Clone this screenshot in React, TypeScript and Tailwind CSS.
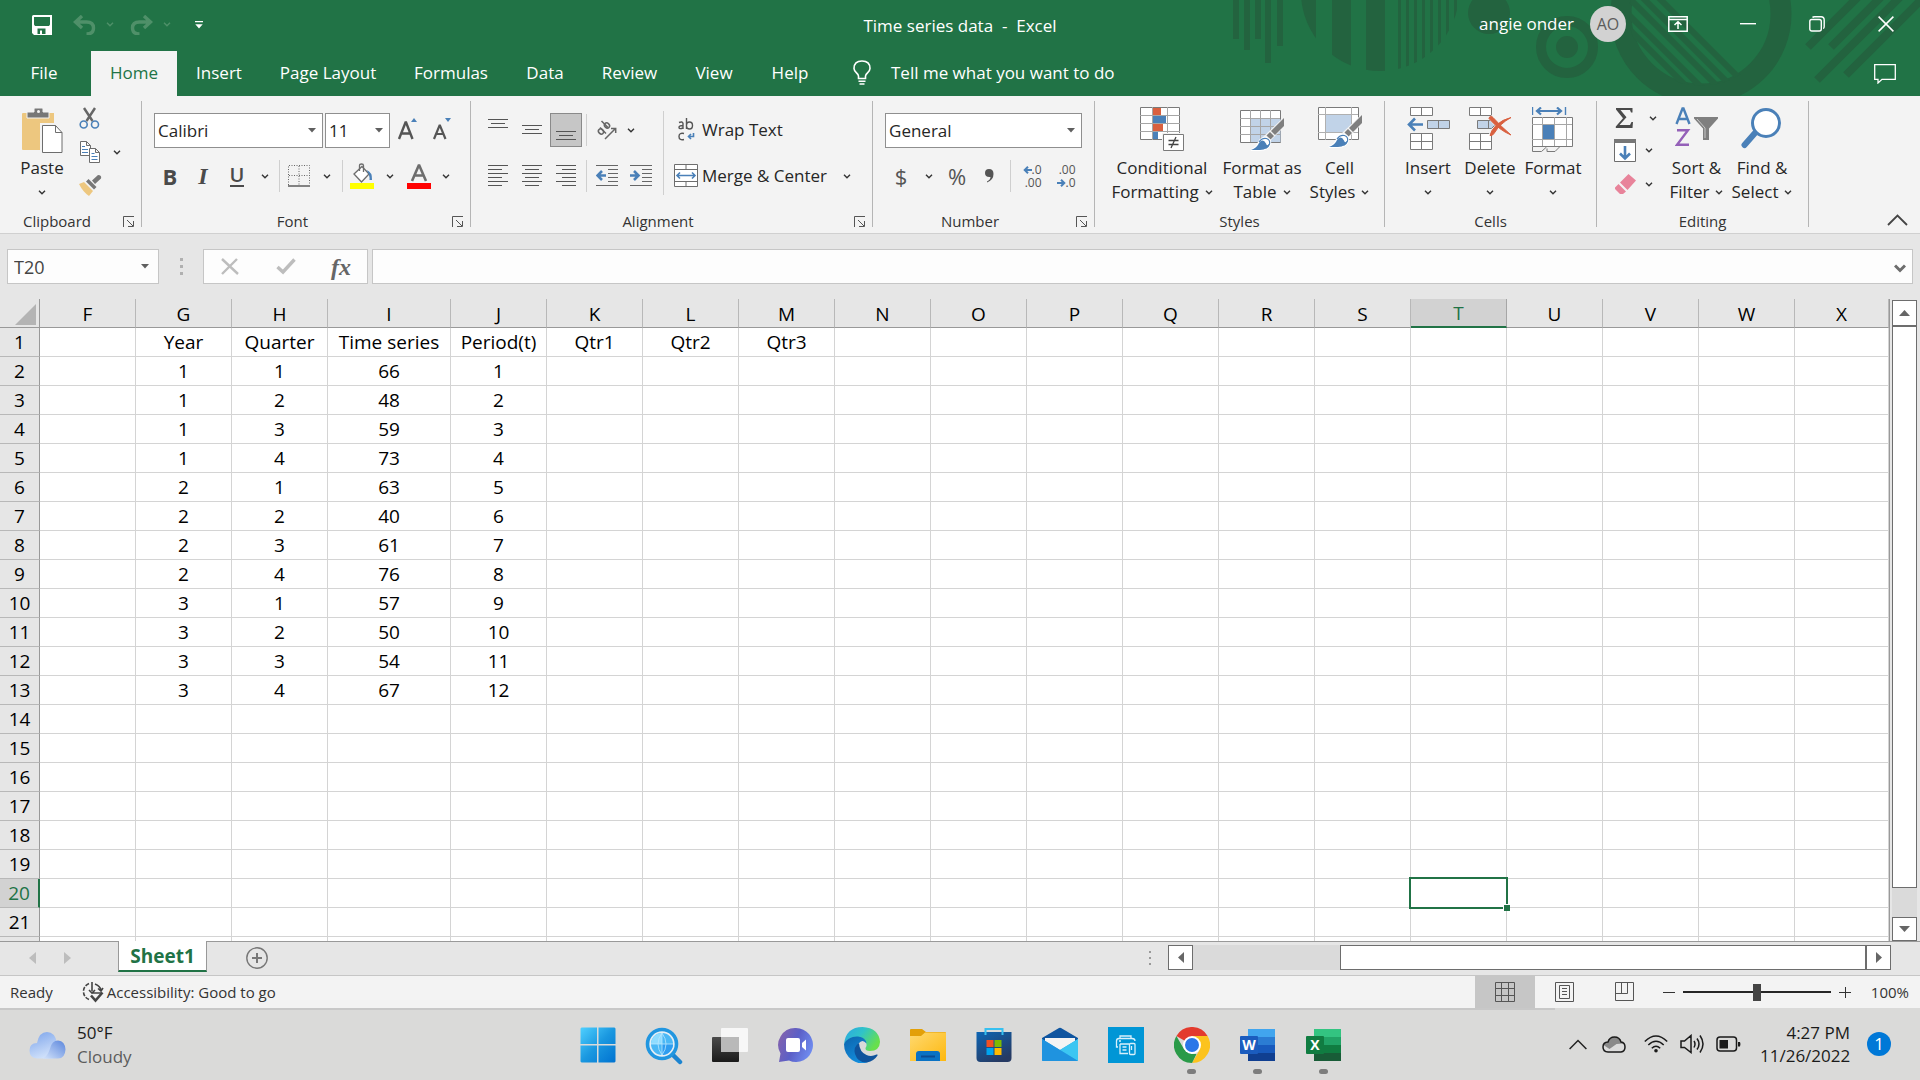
import type { ReactNode } from "react";

const columns = [
  { name: "F", width: "w-[96px]" },
  { name: "G", width: "w-[96px]" },
  { name: "H", width: "w-[96px]" },
  { name: "I", width: "w-[123px]" },
  { name: "J", width: "w-[96px]" },
  { name: "K", width: "w-[96px]" },
  { name: "L", width: "w-[96px]" },
  { name: "M", width: "w-[96px]" },
  { name: "N", width: "w-[96px]" },
  { name: "O", width: "w-[96px]" },
  { name: "P", width: "w-[96px]" },
  { name: "Q", width: "w-[96px]" },
  { name: "R", width: "w-[96px]" },
  { name: "S", width: "w-[96px]" },
  { name: "T", width: "w-[96px]" },
  { name: "U", width: "w-[96px]" },
  { name: "V", width: "w-[96px]" },
  { name: "W", width: "w-[96px]" },
  { name: "X", width: "" },
];

const sheet: Record<number, Record<string, string>> = {
  1: { G: "Year", H: "Quarter", I: "Time series", J: "Period(t)", K: "Qtr1", L: "Qtr2", M: "Qtr3" },
  2: { G: "1", H: "1", I: "66", J: "1" },
  3: { G: "1", H: "2", I: "48", J: "2" },
  4: { G: "1", H: "3", I: "59", J: "3" },
  5: { G: "1", H: "4", I: "73", J: "4" },
  6: { G: "2", H: "1", I: "63", J: "5" },
  7: { G: "2", H: "2", I: "40", J: "6" },
  8: { G: "2", H: "3", I: "61", J: "7" },
  9: { G: "2", H: "4", I: "76", J: "8" },
  10: { G: "3", H: "1", I: "57", J: "9" },
  11: { G: "3", H: "2", I: "50", J: "10" },
  12: { G: "3", H: "3", I: "54", J: "11" },
  13: { G: "3", H: "4", I: "67", J: "12" },
};

// the last row is only a sliver under row 21, so it carries no number
const lastRow = 22;
const rows = Array.from({ length: lastRow }, (_, i) => i + 1);

const tabs = [
  { name: "File", width: "w-[88px]" },
  { name: "Home", width: "w-[86px]" },
  { name: "Insert", width: "w-[84px]" },
  { name: "Page Layout", width: "w-[134px]" },
  { name: "Formulas", width: "w-[112px]" },
  { name: "Data", width: "w-[76px]" },
  { name: "Review", width: "w-[93px]" },
  { name: "View", width: "w-[76px]" },
  { name: "Help", width: "w-[76px]" },
];

/* ---------- small shared parts ---------- */

function Chevron() {
  return (
    <svg width="8" height="5" viewBox="0 0 8 5" fill="none" stroke="#333" strokeWidth="1.4">
      <path d="M1 .8 4 3.8 7 .8" />
    </svg>
  );
}

function DownArrow({ className = "" }: { className?: string }) {
  return (
    <svg width="8" height="5" viewBox="0 0 8 5" fill="#5f5f5f" className={className}>
      <path d="M0 0h8L4 4.5z" />
    </svg>
  );
}

function Tool({ label, className = "w-8", children }: { label: string; className?: string; children: ReactNode }) {
  return (
    <button type="button" aria-label={label} className={`flex h-[34px] shrink-0 items-center justify-center ${className}`}>
      {children}
    </button>
  );
}

function Drop({ label, className = "w-6" }: { label: string; className?: string }) {
  return (
    <Tool label={label} className={className}>
      <Chevron />
    </Tool>
  );
}

function Sep({ className = "w-[7px]" }: { className?: string }) {
  return (
    <div className={`flex h-8 shrink-0 justify-center ${className}`}>
      <div className="w-px bg-[#cfcfcf]" />
    </div>
  );
}

function Combo({ label, value, className }: { label: string; value: string; className: string }) {
  return (
    <div className={`relative ${className}`}>
      <select aria-label={label} className="block h-[35px] w-full appearance-none border border-[#8f8f8f] bg-white px-[3px] pt-[2px] text-[17px] text-[#262626]">
        <option>{value}</option>
      </select>
      <DownArrow className="pointer-events-none absolute top-[15px] right-[7px]" />
    </div>
  );
}

function Group({ label, launcher, children }: { label: string; launcher?: boolean; children: ReactNode }) {
  return (
    <>
      <section aria-label={label} className="flex shrink-0 flex-col pt-[11px]">
        <div className="flex h-[101px]">{children}</div>
        <div className="flex h-[25px] items-center pt-[2px] text-[15px] text-[#333]">
          <span className="flex-1 text-center">{label}</span>
          {launcher && (
            <button type="button" aria-label={`${label} settings`} className="flex w-[27px] pl-[9px]">
              <svg width="12" height="12" viewBox="0 0 12 12" fill="none" stroke="#555">
                <path d="M.5 11V.5H11M4 4l6 6M10.500 5v5.500H5" />
              </svg>
            </button>
          )}
        </div>
      </section>
      <div className="mt-[5px] h-[126px] w-px shrink-0 bg-[#b5b5b5]" />
    </>
  );
}

function BigButton({ icon, lines, className }: { icon: ReactNode; lines: string[]; className: string }) {
  return (
    <button type="button" className={`flex shrink-0 flex-col items-center text-[17px] leading-6 text-[#262626] ${className}`}>
      <span className="flex h-[49px] shrink-0 items-start justify-center">{icon}</span>
      <span className="whitespace-nowrap">{lines[0]}</span>
      <span className="flex h-6 items-center gap-[6px] whitespace-nowrap">
        {lines[1]}
        <Chevron />
      </span>
    </button>
  );
}

/* ---------- header ---------- */

function HeaderArt() {
  const thin = [1398, 1406, 1414, 1422, 1430, 1438, 1446, 1454];
  const diagonal = [1590, 1604, 1621, 1635, 1651];
  return (
    <svg className="pointer-events-none absolute top-0 right-0" width="700" height="96" viewBox="1220 0 700 96" fill="#23633f">
      <defs>
        <clipPath id="stripeDisc">
          <circle cx="1380" cy="-8" r="79" />
        </clipPath>
        <clipPath id="innerDisc">
          <circle cx="1701" cy="14" r="72" />
        </clipPath>
      </defs>
      <path d="M1233 0h6v39h-6zM1244 0h6v50h-6zM1255 0h6v39h-6zM1265 0h6v63h-6zM1277 0h6v46h-6z" />
      <g clipPath="url(#stripeDisc)">
        <path d="M1296 0h20v96h-20zM1332 0h19v96h-19zM1366 0h19v96h-19z" />
        {thin.map((x) => (
          <rect key={x} x={x} y="0" width="3" height="96" />
        ))}
      </g>
      <circle cx="1489" cy="13" r="21" />
      <circle cx="1567" cy="47" r="11" />
      <circle cx="1567" cy="47" r="26" fill="none" stroke="#23633f" strokeWidth="10" />
      <circle cx="1701" cy="14" r="80" fill="none" stroke="#23633f" strokeWidth="21" />
      <g clipPath="url(#innerDisc)" stroke="#23633f" strokeWidth="6">
        {diagonal.map((x) => (
          <path key={x} d={`M${x} -10l130 130`} />
        ))}
      </g>
      <g stroke="#23633f" strokeWidth="8">
        <path d="M1808 47l50-50M1831 47l50-50M1817 80l84-84M1846 75l79-79" />
      </g>
    </svg>
  );
}

function TitleBar() {
  return (
    <div className="relative grid h-[51px] grid-cols-[1fr_auto_1fr] items-center text-[17px] text-white">
      <div className="flex items-center pb-[2px] pl-[32px]">
        <button type="button" aria-label="Save">
          <svg width="20" height="20" viewBox="0 0 20 20">
            <path fill="#fff" fillRule="evenodd" d="M0 1.500Q0 0 1.500 0H20V20H2L0 18zM2 2V9.500L3 11H17L18 9.500V2zM5.500 13.500V19H8V15.500H10V19H13.500V13.500z" />
          </svg>
        </button>
        <button type="button" aria-label="Undo" className="ml-[21px]">
          <svg width="23" height="20" viewBox="0 0 23 20" fill="none" stroke="#4f9069" strokeWidth="3.400">
            <path d="M9 1 2.500 7 9 13M3 7h10.500q7 0 7 6t-7 6" />
          </svg>
        </button>
        <button type="button" aria-label="Undo list" className="ml-[10px]">
          <svg width="8" height="5" viewBox="0 0 8 5" fill="none" stroke="#4f9069" strokeWidth="1.400">
            <path d="M1 .8 4 3.800 7 .8" />
          </svg>
        </button>
        <button type="button" aria-label="Redo" className="ml-[16px]">
          <svg width="23" height="20" viewBox="0 0 23 20" fill="none" stroke="#4f9069" strokeWidth="3.400">
            <path d="M14 1l6.500 6L14 13M20 7H9.500q-7 0-7 6t7 6" />
          </svg>
        </button>
        <button type="button" aria-label="Redo list" className="ml-[10px]">
          <svg width="8" height="5" viewBox="0 0 8 5" fill="none" stroke="#4f9069" strokeWidth="1.400">
            <path d="M1 .8 4 3.800 7 .8" />
          </svg>
        </button>
        <button type="button" aria-label="Customize toolbar" className="ml-[24px]">
          <svg width="8" height="8" viewBox="0 0 8 8" fill="#fff">
            <path d="M0 0h8v1.300H0zM.3 3.300h7.400L4 7.500z" />
          </svg>
        </button>
      </div>
      <h1 className="whitespace-pre">{"Time series data  -  Excel"}</h1>
      <div className="flex items-center justify-end pb-[4px]">
        <span className="mr-[16px]">angie onder</span>
        <span className="mr-[17px] flex size-9 items-center justify-center rounded-full bg-[#d2d2d2] text-[16px] text-[#5c5c5c]">AO</span>
        <Tool label="Ribbon display options" className="w-[70px]">
          <svg width="20" height="16" viewBox="0 0 20 16" fill="none" stroke="#fff" strokeWidth="1.500">
            <path d="M.8.8h18.400v14.400H.8zM1 3.500h18M10 13V6M6.500 9 10 5.800 13.500 9" />
          </svg>
        </Tool>
        <Tool label="Minimize" className="w-[69px]">
          <svg width="16" height="4" viewBox="0 0 16 4" fill="#fff">
            <path d="M0 1h16v1.400H0z" />
          </svg>
        </Tool>
        <Tool label="Restore" className="w-[69px]">
          <svg width="16" height="16" viewBox="0 0 16 16" fill="none" stroke="#fff" strokeWidth="1.400">
            <rect x=".8" y="3.500" width="11.500" height="11.500" rx="2" />
            <path d="M3.500 1.500Q4 .8 5.500.8H12Q15.200.8 15.200 4V10.500Q15.200 12 14.300 12.600" />
          </svg>
        </Tool>
        <Tool label="Close" className="w-[69px]">
          <svg width="16" height="16" viewBox="0 0 16 16" fill="none" stroke="#fff" strokeWidth="1.500">
            <path d="m.6.6 14.800 14.800M15.400.6.6 15.400" />
          </svg>
        </Tool>
      </div>
    </div>
  );
}

function TabBar() {
  return (
    <nav className="relative flex h-[45px] items-stretch text-[17px] text-white">
      {tabs.map((tab) => (
        <button
          key={tab.name}
          type="button"
          className={`shrink-0 pb-[2px] ${tab.width} ${tab.name === "Home" ? "ml-[3px] bg-[#f3f3f3] text-[#217346]" : ""}`}
        >
          {tab.name}
        </button>
      ))}
      <button type="button" className="ml-[25px] flex items-center gap-[20px] pb-[2px]">
        <svg width="18" height="25" viewBox="0 0 18 25" fill="none" stroke="#fff" strokeWidth="1.600">
          <path d="M5.500 18.500V16Q5.300 14.500 3.500 12.800 1 10.500 1 8.500 1 1 9 1t8 7.500q0 2-2.500 4.300-1.800 1.700-2 3.200v2.500zM5.500 21.200h7M6.500 24h5" />
        </svg>
        Tell me what you want to do
      </button>
      <button type="button" aria-label="Comments" className="mr-[24px] ml-auto">
        <svg width="22" height="20" viewBox="0 0 22 20" fill="none" stroke="#fff" strokeWidth="1.300">
          <path d="M.7.7h20.600v14.600H8L4 19v-3.700H.7z" />
        </svg>
      </button>
    </nav>
  );
}

/* ---------- ribbon icons ---------- */

function LinesIcon({ rows }: { rows: [number, number, number][] }) {
  return (
    <svg width="20" height="22" viewBox="0 0 20 22" fill="#555">
      {rows.map(([x, y, w]) => (
        <rect key={y} x={x} y={y} width={w} height="1" />
      ))}
    </svg>
  );
}

function Brush() {
  return (
    <g>
      <path d="M44 11v8l-9 9-4-4z" fill="#7f7f7f" />
      <path d="M30 25l4 4-3.500 3.500-4-4z" fill="#7f7f7f" />
      <path d="M11 43q6-2 8-8 3-5 7.500-4 4.500 1.500 3.500 6-2 6-10 6z" fill="#fff" stroke="#fff" strokeWidth="2" />
      <path d="M11 43q6-2 8-7 4-5 7 .5 1 3.500 4-.5-2 7-10 7z" fill="#4a80b8" />
      <path d="M19 35q3-4.500 7.500-3.500 4 1.500 3 5.500-1 3-4 4.500" fill="none" stroke="#4a80b8" strokeWidth="1.200" />
    </g>
  );
}

function ConditionalIcon() {
  return (
    <svg width="44" height="46" viewBox="0 0 44 46">
      <path d="M.5.500h39v32H.5z" fill="#fff" stroke="#7a7a7a" />
      <path d="M0 8.500h40M0 16.500h40M0 24.500h40M12.500 0v33M27.500 0v33" stroke="#a6a6a6" />
      <path d="M13 1h8v7h-8zM13 17h10v7H13z" fill="#d9603f" />
      <path d="M13 9h13v7H13zM13 25h5v7h-5z" fill="#4a80b8" />
      <path d="M22 26h22v18H22z" fill="#f3f3f3" />
      <path d="M23.500 27.500h20v16h-20z" fill="#fff" stroke="#7a7a7a" />
      <path d="M28.500 33.500h10M28.500 37.500h10M36 30l-5 11" stroke="#444" strokeWidth="1.300" />
    </svg>
  );
}

function TableStyleIcon() {
  return (
    <svg width="44" height="46" viewBox="0 0 44 46">
      <path d="M.5 3.500h40v32H.5z" fill="#fff" stroke="#7a7a7a" />
      <path d="M10.500 12h30v23h-30z" fill="#c1d3e8" />
      <path d="M10.500 3v32M20.500 3v32M30.500 3v32M0 11.500h40M0 19.500h40M0 27.500h40" stroke="#a6a6a6" />
      <path d="M44 10v10L30 34l-7-4z" fill="#f3f3f3" />
      <Brush />
    </svg>
  );
}

function CellStyleIcon() {
  return (
    <svg width="44" height="46" viewBox="0 0 44 46">
      <path d="M.5.500h40v32H.5z" fill="#fff" stroke="#7a7a7a" />
      <path d="M7.500 8h26v18h-26z" fill="#c1d3e8" />
      <path d="M7.500 0v33M33.500 0v33M0 7.500h40M0 25.500h40" stroke="#b0b0b0" />
      <path d="M44 7v10L30 31l-7-4z" fill="#f3f3f3" />
      <g transform="translate(0 -3)">
        <Brush />
      </g>
    </svg>
  );
}

function InsertIcon() {
  return (
    <svg width="43" height="46" viewBox="0 0 43 46" fill="#fff" stroke="#7a7a7a">
      <path d="M3.500.500h22v8h-22zM14.500.500v8M3.500 26.500h22v16h-22zM3.500 34.500h22M14.500 26.500v16" />
      <path d="M20.500 13.500h22v8h-22zM31.500 13.500v8" fill="#c1d3e8" />
      <path d="M16 17.500H2M8 11.500l-6 6 6 6" fill="none" stroke="#4a80b8" strokeWidth="2.600" />
    </svg>
  );
}

function DeleteIcon() {
  return (
    <svg width="43" height="46" viewBox="0 0 43 46" fill="#fff" stroke="#7a7a7a">
      <path d="M.5.500h22v8h-22zM11.500.500v8M.5 26.500h22v16H.5zM.5 34.500h22M11.500 26.500v16" />
      <path d="M8.500 13.500h14l4 4-4 4h-14zM19.500 13.500v8" fill="#c1d3e8" />
      <path d="M21 9.500q9 12 21 18M42 11q-12 5-20 17" fill="none" stroke="#f3f3f3" strokeWidth="5" />
      <path d="M20 11.500q1-4 4-1 8 9 18 17.500-12-5-22-16.500zM42 10.500q-11 6-17 16-2 3-4 2 1-5 6-10 6-6 15-8z" fill="#d9603f" stroke="#d9603f" />
    </svg>
  );
}

function FormatIcon() {
  return (
    <svg width="42" height="47" viewBox="0 0 42 47" fill="none" stroke="#7a7a7a">
      <path d="M.5 0v8M33.500 0v8" stroke="#4a80b8" strokeWidth="1.400" />
      <path d="M5 4h24M9 .5 5 4l4 3.500M25 .5 29 4l-4 3.500" stroke="#4a80b8" strokeWidth="2.200" />
      <path d="M.5 10.500h40v29H.5z" fill="#fff" />
      <path d="M10.500 10v29M22.500 10v29M34.500 10v29M0 17.500h40M0 32.500h40" stroke="#a6a6a6" />
      <path d="M11 18h11v14H11z" fill="#4a80b8" stroke="none" />
      <path d="M.5 40v4.500h9l5-4.500M15 44.500h8l4.500-4.500M15 44.500v-3" />
    </svg>
  );
}

function SortIcon() {
  return (
    <svg width="43" height="46" viewBox="0 0 43 46">
      <path d="M1.500 17 7.500 1.500h1L14.500 17M3.700 12h8.600" fill="none" stroke="#4a80b8" strokeWidth="2.400" />
      <path d="M2 23.200h11L2 37.800h12" fill="none" stroke="#9460b8" strokeWidth="2.400" />
      <path d="M19 10h24v1.500l-9 10V33h-6V21.500l-9-10z" fill="#7f7f7f" />
      <path d="M22 12l8 9v10" fill="none" stroke="#c9c9c9" />
    </svg>
  );
}

function FindIcon() {
  return (
    <svg width="42" height="46" viewBox="0 0 42 46">
      <path d="M14 26 3.500 38" stroke="#4a80b8" strokeWidth="6" strokeLinecap="round" />
      <circle cx="25" cy="16" r="13.500" fill="#fff" stroke="#4a80b8" strokeWidth="3" />
    </svg>
  );
}

/* ---------- ribbon ---------- */

function ClipboardGroup() {
  return (
    <Group label="Clipboard" launcher>
      <button type="button" className="ml-[13px] flex w-[58px] flex-col items-center text-[17px] leading-6 text-[#262626]">
        <svg width="42" height="49" viewBox="0 0 42 49" className="shrink-0">
          <path d="M2 6h31v37H2q-1 0-1-1V7q0-1 1-1z" fill="#edc77f" />
          <path d="M6 5h7V2q0-1 1-1h7q1 0 1 1v3h6v6H6z" fill="#777" stroke="#f3f3f3" />
          <circle cx="17.500" cy="4.500" r="1.500" fill="#f3f3f3" />
          <path d="M20.500 17.500h14l7 7v21h-21z" fill="#fff" stroke="#f3f3f3" strokeWidth="3" />
          <path d="M21.500 18.500h13l6.500 7v20H21.500zM34.500 18.500v7H41" fill="#fff" stroke="#6d6d6d" />
        </svg>
        <span>Paste</span>
        <span className="flex h-6 items-center">
          <Chevron />
        </span>
      </button>
      <div className="mr-[7px] flex w-[63px] flex-col">
        <div className="flex h-[22px] items-center pl-[8px]">
          <button type="button" aria-label="Cut">
            <svg width="21" height="22" viewBox="0 0 21 22" fill="none" stroke="#666">
              <path d="M5 1l8.500 13M16 1 7.500 14" strokeWidth="2.400" />
              <circle cx="4.700" cy="17.500" r="3.500" stroke="#4a80b8" strokeWidth="1.600" />
              <circle cx="16" cy="17.500" r="3.500" stroke="#4a80b8" strokeWidth="1.600" />
            </svg>
          </button>
        </div>
        <div className="flex h-[46px] items-center gap-[12px] pl-[8px]">
          <button type="button" aria-label="Copy">
            <svg width="22" height="22" viewBox="0 0 22 22" fill="#fff" stroke="#6d6d6d">
              <path d="M1.500.500h6l4 4v10h-10zM7.500.500v4h4" />
              <path d="M3 5.500h3M3 8.500h6M3 11.500h6" stroke="#4a80b8" />
              <path d="M10.500 7.500h6l4 4v10h-10zM16.500 7.500v4h4" />
              <path d="M12.500 12.500h3M12.500 15.500h6M12.500 18.500h6" stroke="#4a80b8" />
            </svg>
          </button>
          <button type="button" aria-label="Copy options">
            <Chevron />
          </button>
        </div>
        <div className="flex h-[22px] items-center pl-[7px]">
          <button type="button" aria-label="Format Painter">
            <svg width="24" height="22" viewBox="0 0 24 22">
              <path d="M1 9l5-2 9 9-4 5q-6-4-10-12z" fill="#edc77f" />
              <path d="M8 6.500 10.500 4l8 8-2.500 2.500zM14 5.500l6-5.500q4 0 3 3.500L17 9z" fill="#777" />
            </svg>
          </button>
        </div>
      </div>
    </Group>
  );
}

function FontGroup() {
  return (
    <Group label="Font" launcher>
      <div className="pr-[12px] pl-[12px]">
        <div className="flex h-[46px] items-center gap-[2px]">
          <Combo label="Font name" value="Calibri" className="w-[169px]" />
          <Combo label="Font size" value="11" className="w-[65px]" />
          <Tool label="Increase font size">
            <svg width="22" height="24" viewBox="0 0 22 24" fill="none" stroke="#555" strokeWidth="2.400">
              <path d="M2 21 8.500 4.500h.6L15.500 21M4.500 15.500h8.500" />
              <path d="M14 4l3-4 3 4z" fill="#4a80b8" stroke="none" />
            </svg>
          </Tool>
          <Tool label="Decrease font size">
            <svg width="22" height="24" viewBox="0 0 22 24" fill="none" stroke="#555" strokeWidth="2.200">
              <path d="M3 21 8.500 7.500h.5L14.500 21M5 16h7.500" />
              <path d="M14 0l3 4 3-4z" fill="#4a80b8" stroke="none" />
            </svg>
          </Tool>
        </div>
        <div className="flex h-[46px] items-center text-[22px] text-[#4a4a4a]">
          <Tool label="Bold">
            <span className="font-bold">B</span>
          </Tool>
          <Tool label="Italic" className="w-[34px]">
            <span className="font-['Liberation_Serif',serif] text-[24px] font-bold italic">I</span>
          </Tool>
          <Tool label="Underline" className="w-[34px]">
            <span className="border-b-2 border-[#4a4a4a] text-[20px] leading-5 font-semibold">U</span>
          </Tool>
          <Drop label="Underline options" className="w-[22px]" />
          <Sep />
          <Tool label="Borders">
            <svg width="22" height="22" viewBox="0 0 22 22" fill="none" stroke="#666">
              <path d="M.5 20V.500h21V20M11 1v19M1 10.500h20" strokeDasharray="1 1.500" />
              <path d="M0 21h22" strokeWidth="1.600" />
            </svg>
          </Tool>
          <Drop label="Border options" />
          <Sep />
          <Tool label="Fill color">
            <svg width="24" height="26" viewBox="0 0 24 26">
              <path d="M4 11 12 3.500l7 7.500-7.500 8z" fill="#fff" stroke="#6d6d6d" strokeWidth="1.300" />
              <path d="M9.500 8V2.500Q9.500 1 11.500 1t2 1.500V9" fill="none" stroke="#6d6d6d" strokeWidth="1.300" />
              <path d="M16.500 7q6 2 5.500 10h-2.500q.5-5-3-10z" fill="#4a80b8" />
              <path d="M0 20h24v6H0z" fill="#ffff00" />
            </svg>
          </Tool>
          <Drop label="Fill color options" />
          <Tool label="Font color" className="w-[34px]">
            <svg width="24" height="26" viewBox="0 0 24 26">
              <path d="M5 18 11.700 2.500h.6L19 18M7.500 12.500h9" fill="none" stroke="#6d6d6d" strokeWidth="2.600" />
              <path d="M0 20h24v6H0z" fill="#ff0000" />
            </svg>
          </Tool>
          <Drop label="Font color options" className="w-5" />
        </div>
      </div>
    </Group>
  );
}

function AlignmentGroup() {
  return (
    <Group label="Alignment" launcher>
      <div className="pl-[11px]">
        <div className="flex h-[46px] items-center gap-[2px]">
          <Tool label="Top align">
            <LinesIcon rows={[[0, 0, 20], [3, 4, 14], [0, 8, 20]]} />
          </Tool>
          <Tool label="Middle align">
            <LinesIcon rows={[[0, 6, 20], [3, 10, 14], [0, 14, 20]]} />
          </Tool>
          <Tool label="Bottom align" className="w-8 border border-[#8a8a8a] bg-[#c6c6c6]">
            <LinesIcon rows={[[0, 12, 20], [3, 16, 14], [0, 20, 20]]} />
          </Tool>
          <Sep className="w-[5px]" />
          <Tool label="Orientation">
            <svg width="22" height="22" viewBox="0 0 22 22" fill="none" stroke="#666" strokeWidth="1.500">
              <ellipse cx="5" cy="12.500" rx="2.300" ry="2.800" transform="rotate(-45 5 12.500)" />
              <path d="M4 8.500l6 6M5.500 2l6.500 6.500" />
              <ellipse cx="11" cy="6.500" rx="2.300" ry="2.800" transform="rotate(-45 11 6.500)" />
              <path d="M9 20 19.500 9.500M15 9.500h4.700V14" />
            </svg>
          </Tool>
          <Drop label="Orientation options" className="w-3" />
        </div>
        <div className="flex h-[46px] items-center gap-[2px]">
          <Tool label="Align left">
            <LinesIcon rows={[[0, 0, 20], [0, 4, 14], [0, 8, 20], [0, 12, 14], [0, 16, 20], [0, 20, 14]]} />
          </Tool>
          <Tool label="Center">
            <LinesIcon rows={[[0, 0, 20], [3, 4, 14], [0, 8, 20], [3, 12, 14], [0, 16, 20], [3, 20, 14]]} />
          </Tool>
          <Tool label="Align right">
            <LinesIcon rows={[[0, 0, 20], [6, 4, 14], [0, 8, 20], [6, 12, 14], [0, 16, 20], [6, 20, 14]]} />
          </Tool>
          <Sep className="w-[5px]" />
          <Tool label="Decrease indent">
            <svg width="22" height="22" viewBox="0 0 22 22">
              <path d="M0 .500h22M12 4.500h10M12 8.500h10M12 12.500h10M12 16.500h10M0 20.500h22" stroke="#666" />
              <path d="M10 10.500H2M6 6l-4.500 4.500L6 15" fill="none" stroke="#4a80b8" strokeWidth="2.600" />
            </svg>
          </Tool>
          <Tool label="Increase indent">
            <svg width="22" height="22" viewBox="0 0 22 22">
              <path d="M0 .500h22M12 4.500h10M12 8.500h10M12 12.500h10M12 16.500h10M0 20.500h22" stroke="#666" />
              <path d="M0 10.500h8M4 6l4.500 4.500L4 15" fill="none" stroke="#4a80b8" strokeWidth="2.600" />
            </svg>
          </Tool>
        </div>
      </div>
      <div className="mt-[4px] ml-[6px] h-[84px] w-px bg-[#cfcfcf]" />
      <div className="pr-[13px] pl-[10px] text-[17px] text-[#262626]">
        <button type="button" className="flex h-[46px] items-center gap-[4px]">
          <svg width="24" height="24" viewBox="0 0 24 24" fill="none" stroke="#555" strokeWidth="1.400">
            <path d="M5 4.500q3.500-1.500 4 1V11M9 7.500q-4 0-4 2t4 .5M12.500 0v11M12.500 7q0-3 3-3t3 3.500-3 3.500-3-3" />
            <path d="M10 15.500q-5-1-5 3t5 3" />
            <path d="M19.500 15v3.500h-5M17 16l-2.500 2.500L17 21" stroke="#4a80b8" strokeWidth="1.600" />
          </svg>
          Wrap Text
        </button>
        <div className="flex h-[46px] items-center">
          <button type="button" className="flex items-center gap-[4px] whitespace-nowrap">
            <svg width="24" height="24" viewBox="0 0 24 24" fill="#fff" stroke="#6d6d6d">
              <path d="M.5.500h23v22H.5zM0 5.500h24M0 17.500h24M12 0v5.500M12 17.500v5" />
              <path d="M3 11.500h18M6 8.500l-3 3 3 3M18 8.500l3 3-3 3" fill="none" stroke="#4a80b8" strokeWidth="1.600" />
            </svg>
            Merge &amp; Center
          </button>
          <Drop label="Merge options" className="ml-[8px] w-6" />
        </div>
      </div>
    </Group>
  );
}

function NumberGroup() {
  return (
    <Group label="Number" launcher>
      <div className="px-[12px]">
        <div className="flex h-[46px] items-center">
          <Combo label="Number format" value="General" className="w-[197px]" />
        </div>
        <div className="flex h-[46px] items-center text-[22px] text-[#555]">
          <Tool label="Accounting format">$</Tool>
          <Drop label="Accounting options" />
          <Tool label="Percent style">%</Tool>
          <Tool label="Comma style">
            <svg width="10" height="14" viewBox="0 0 10 14" fill="#555">
              <path d="M5 0q4.500 0 4.500 5 0 6-6.500 8.500v-1Q6.500 10.500 6.500 8 1 8.500 1 4q0-4 4-4z" />
            </svg>
          </Tool>
          <Sep className="w-[11px]" />
          <Tool label="Increase decimal">
            <span className="flex flex-col text-right text-[12px] leading-[13px]">
              <span className="flex items-center justify-end">
                <svg width="9" height="8" viewBox="0 0 9 8" fill="none" stroke="#4a80b8" strokeWidth="2">
                  <path d="M9 4H2M5 .7 1.700 4 5 7.300" />
                </svg>
                .0
              </span>
              <span>.00</span>
            </span>
          </Tool>
          <Tool label="Decrease decimal" className="ml-[2px] w-8">
            <span className="flex flex-col text-right text-[12px] leading-[13px]">
              <span>.00</span>
              <span className="flex items-center justify-end">
                <svg width="9" height="8" viewBox="0 0 9 8" fill="none" stroke="#4a80b8" strokeWidth="2">
                  <path d="M0 4h7M4 .7 7.300 4 4 7.300" />
                </svg>
                .0
              </span>
            </span>
          </Tool>
        </div>
      </div>
    </Group>
  );
}

function EditingGroup() {
  return (
    <Group label="Editing">
      <div className="ml-[12px] w-[55px]">
        <div className="flex h-[22px] items-center">
          <Tool label="AutoSum">
            <svg width="20" height="20" viewBox="0 0 20 20" fill="#4a4a4a">
              <path d="M1 0h16.500v4.500h-1.500L15 2H5.500l6 7.200L4.500 17H15l1.500-3H18l-.5 6H.8v-1.500L8 10.200 1 1.500z" />
            </svg>
          </Tool>
          <Drop label="AutoSum options" />
        </div>
        <div className="flex h-[42px] items-center">
          <Tool label="Fill">
            <svg width="22" height="23" viewBox="0 0 22 23">
              <path d="M.5.500h21v22H.5z" fill="#fff" stroke="#6d6d6d" />
              <path d="M0 0h22v4H0z" fill="#777" />
              <path d="M11 7v12M6 14.500l5 5 5-5" fill="none" stroke="#4a80b8" strokeWidth="2.600" />
            </svg>
          </Tool>
          <Drop label="Fill options" className="w-4" />
        </div>
        <div className="flex h-[26px] items-center">
          <Tool label="Clear">
            <svg width="22" height="20" viewBox="0 0 22 20" fill="#e8839a">
              <path d="M14.500 0 22 6.500 13.500 16 6 8.500zM4.500 10l7.500 7.500-3 2.500H6L1 15v-1.500z" />
            </svg>
          </Tool>
          <Drop label="Clear options" className="w-4" />
        </div>
      </div>
      <BigButton className="w-[65px]" icon={<SortIcon />} lines={["Sort &", "Filter"]} />
      <BigButton className="mr-[13px] w-[66px]" icon={<FindIcon />} lines={["Find &", "Select"]} />
    </Group>
  );
}

function Ribbon() {
  return (
    <div className="flex border-b border-[#d0d0d0] bg-[#f3f3f3]">
      <ClipboardGroup />
      <FontGroup />
      <AlignmentGroup />
      <NumberGroup />
      <Group label="Styles">
        <BigButton className="ml-[14px] w-[106px]" icon={<ConditionalIcon />} lines={["Conditional", "Formatting"]} />
        <BigButton className="w-[94px]" icon={<TableStyleIcon />} lines={["Format as", "Table"]} />
        <BigButton className="mr-[14px] w-[61px]" icon={<CellStyleIcon />} lines={["Cell", "Styles"]} />
      </Group>
      <Group label="Cells">
        <BigButton className="ml-[12px] w-[62px]" icon={<InsertIcon />} lines={["Insert"]} />
        <BigButton className="w-[62px]" icon={<DeleteIcon />} lines={["Delete"]} />
        <BigButton className="mr-[11px] w-[64px]" icon={<FormatIcon />} lines={["Format"]} />
      </Group>
      <EditingGroup />
      <button type="button" aria-label="Collapse the ribbon" className="mr-[12px] mb-[7px] ml-auto self-end">
        <svg width="21" height="12" viewBox="0 0 21 12" fill="none" stroke="#444" strokeWidth="1.800">
          <path d="m1 11 9.500-9.500L20 11" />
        </svg>
      </button>
    </div>
  );
}

/* ---------- formula bar and grid ---------- */

function FormulaBar() {
  return (
    <div className="flex bg-[#e6e6e6] px-[7px] pt-[15px] pb-[15px]">
      <div className="relative w-[152px] shrink-0">
        <input aria-label="Name box" defaultValue="T20" className="block h-[35px] w-full border border-[#c6c6c6] bg-[#fdfdfd] px-[6px] text-[18px] text-[#444]" />
        <DownArrow className="pointer-events-none absolute top-[15px] right-[10px]" />
      </div>
      <div className="flex w-[44px] shrink-0 flex-col items-center justify-center gap-[4px]">
        <span className="size-[3px] bg-[#b0b0b0]" />
        <span className="size-[3px] bg-[#b0b0b0]" />
        <span className="size-[3px] bg-[#b0b0b0]" />
      </div>
      <div className="flex h-[35px] w-[165px] shrink-0 items-center justify-between border border-[#c6c6c6] bg-[#fdfdfd] px-[10px]">
        <Tool label="Cancel">
          <svg width="18" height="17" viewBox="0 0 18 17" fill="none" stroke="#bdbdbd" strokeWidth="2.400">
            <path d="m1 1 16 15M16 1 1 16" />
          </svg>
        </Tool>
        <Tool label="Enter">
          <svg width="20" height="17" viewBox="0 0 20 17" fill="none" stroke="#bdbdbd" strokeWidth="3.400">
            <path d="m1.500 9 5.500 5L18.500 1.500" />
          </svg>
        </Tool>
        <Tool label="Insert function">
          <span className="font-['Liberation_Serif',serif] text-[24px] leading-6 font-bold text-[#666] italic">fx</span>
        </Tool>
      </div>
      <div className="relative ml-[4px] flex-1">
        <input aria-label="Formula bar" className="block h-[35px] w-full border border-[#c6c6c6] bg-[#fdfdfd] px-2 text-[17px]" />
        <svg width="12" height="9" viewBox="0 0 12 9" fill="none" stroke="#6d6d6d" strokeWidth="3" className="pointer-events-none absolute top-[15px] right-[7px]">
          <path d="m1 1.500 5 5 5-5" />
        </svg>
      </div>
    </div>
  );
}

function Grid() {
  return (
    <div className="min-w-0 flex-1 overflow-hidden border-r border-[#999]">
      <table className="w-full table-fixed border-separate border-spacing-0 text-[19px] leading-7 text-black">
        <thead>
          <tr className="h-[29px] leading-[26px]">
            <th className="w-[40px] border-r border-b border-r-[#999] border-b-[#999] bg-[#e6e6e6] p-0">
              <svg width="21" height="21" viewBox="0 0 21 21" className="mt-[2px] ml-[15px]" fill="#b4b4b4">
                <path d="M21 0v21H0z" />
              </svg>
            </th>
            {columns.map((col) => (
              <th
                key={col.name}
                scope="col"
                className={`h-[29px] border-r p-0 pt-[1px] font-normal ${col.width} ${
                  col.name === "T"
                    ? "border-b-2 border-r-[#a6a6a6] border-b-[#217346] bg-[#d2d2d2] text-[#217346]"
                    : "border-b border-r-[#b8b8b8] border-b-[#999] bg-[#e6e6e6]"
                }`}
              >
                {col.name}
              </th>
            ))}
          </tr>
        </thead>
        <tbody>
          {rows.map((row) => (
            <tr key={row} className="h-[29px] bg-white">
              <th
                scope="row"
                className={`border-b border-b-[#b8b8b8] p-0 text-center font-normal ${
                  row === 20 ? "border-r-2 border-r-[#217346] bg-[#d2d2d2] text-[#217346]" : "border-r border-r-[#999] bg-[#e6e6e6]"
                }`}
              >
                {row < lastRow && row}
              </th>
              {columns.map((col) => (
                <td key={col.name} className="relative border-r border-b border-[#d4d4d4] p-0 text-center whitespace-nowrap">
                  {sheet[row]?.[col.name]}
                  {row === 20 && col.name === "T" && (
                    <span className="absolute -inset-[2px] z-10 border-2 border-[#217346]">
                      <span className="absolute -right-[4px] -bottom-[4px] size-[7px] border-t border-l border-white bg-[#217346]" />
                    </span>
                  )}
                </td>
              ))}
            </tr>
          ))}
        </tbody>
      </table>
    </div>
  );
}

function VerticalScrollbar() {
  return (
    <div className="flex w-[30px] shrink-0 flex-col bg-[#e6e6e6] pt-[1px] pr-[3px] pl-[2px]">
      <button type="button" aria-label="Scroll up" className="flex h-[26px] items-center justify-center border border-[#6d6d6d] bg-white">
        <svg width="11" height="6" viewBox="0 0 11 6" fill="#666">
          <path d="M5.500 0 11 6H0z" />
        </svg>
      </button>
      <div className="flex-1 border border-[#6d6d6d] bg-white" />
      <div className="h-[29px] bg-[#dadada]" />
      <button type="button" aria-label="Scroll down" className="flex h-[24px] items-center justify-center border border-[#6d6d6d] bg-white">
        <svg width="11" height="6" viewBox="0 0 11 6" fill="#666">
          <path d="M0 0h11L5.500 6z" />
        </svg>
      </button>
    </div>
  );
}

function SheetBar() {
  return (
    <div className="flex h-[34px] border-t border-[#999] bg-[#e6e6e6]">
      <div className="flex w-[118px] items-center gap-[28px] pb-[2px] pl-[29px]">
        <button type="button" aria-label="Previous sheet">
          <svg width="7" height="12" viewBox="0 0 7 12" fill="#bdbdbd">
            <path d="M7 0v12L0 6z" />
          </svg>
        </button>
        <button type="button" aria-label="Next sheet">
          <svg width="7" height="12" viewBox="0 0 7 12" fill="#bdbdbd">
            <path d="M0 0v12l7-6z" />
          </svg>
        </button>
      </div>
      <button type="button" className="-mt-px mb-[3px] w-[89px] border-x border-b-2 border-x-[#999] border-b-[#217346] bg-white text-[19px] leading-7 font-bold text-[#217346]">
        Sheet1
      </button>
      <button type="button" aria-label="New sheet" className="ml-[39px] pb-[2px]">
        <svg width="22" height="22" viewBox="0 0 22 22" fill="none" stroke="#777" strokeWidth="1.400">
          <circle cx="11" cy="11" r="10.200" />
          <path d="M11 6v10M6 11h10" strokeWidth="2" />
        </svg>
      </button>
      <div className="mr-[29px] ml-auto flex items-center pb-[2px]">
        <div className="mr-[17px] flex flex-col gap-[4px]">
          <span className="size-[2px] bg-[#999]" />
          <span className="size-[2px] bg-[#999]" />
          <span className="size-[2px] bg-[#999]" />
        </div>
        <button type="button" aria-label="Scroll left" className="flex h-[25px] w-[25px] items-center justify-center border border-[#6d6d6d] bg-white">
          <svg width="6" height="11" viewBox="0 0 6 11" fill="#666">
            <path d="M6 0v11L0 5.500z" />
          </svg>
        </button>
        <div className="h-[25px] w-[147px] bg-[#dadada]" />
        <div className="h-[25px] w-[526px] border border-[#6d6d6d] bg-white" />
        <button type="button" aria-label="Scroll right" className="flex h-[25px] w-[25px] items-center justify-center border border-[#6d6d6d] bg-white">
          <svg width="6" height="11" viewBox="0 0 6 11" fill="#666">
            <path d="M0 0v11l6-5.500z" />
          </svg>
        </button>
      </div>
    </div>
  );
}

function StatusBar() {
  return (
    <div className="flex h-[33px] items-center border-t border-[#c6c6c6] bg-[#f3f3f3] pl-[10px] text-[15px] text-[#333]">
      <span>Ready</span>
      <button type="button" className="ml-[29px] flex items-center gap-[3px]">
        <svg width="22" height="22" viewBox="0 0 22 22" fill="none" stroke="#444" strokeWidth="1.600">
          <path d="M7 2.500Q1.500 5 1.500 10.500T7 18.500" strokeDasharray="4 1.500" />
          <path d="M10 1v9M7 9l3 3 3-3M13 3q5 2 6 6M16 7.500l3 2.500 2-3M10 12h9" />
          <path d="M9 14.500l4.500 5 7-8" strokeWidth="2.600" />
        </svg>
        Accessibility: Good to go
      </button>
      <div className="ml-auto flex h-full items-center">
        <Tool label="Normal view" className="h-[32px] w-[60px] bg-[#c6c6c6]">
          <svg width="20" height="20" viewBox="0 0 20 20" fill="none" stroke="#555">
            <path d="M.5.500h19v19H.5zM6.500 0v20M13.500 0v20M0 6.500h20M0 13.500h20" />
          </svg>
        </Tool>
        <Tool label="Page layout view" className="h-[32px] w-[60px]">
          <svg width="20" height="20" viewBox="0 0 20 20" fill="none" stroke="#555">
            <path d="M.5.500h18v19H.5zM4.500 3.500h10v13h-10zM7 6.500h5M7 9.500h5M7 12.500h5" />
          </svg>
        </Tool>
        <Tool label="Page break preview" className="h-[32px] w-[60px]">
          <svg width="20" height="20" viewBox="0 0 20 20" fill="none" stroke="#555">
            <path d="M.5.500h18v18H.5zM.5 11.500h12V.500M6.500.500v11" />
          </svg>
        </Tool>
        <button type="button" aria-label="Zoom out" className="ml-[8px]">
          <svg width="12" height="12" viewBox="0 0 12 12" stroke="#333">
            <path d="M0 6.500h12" />
          </svg>
        </button>
        <input
          type="range"
          aria-label="Zoom"
          min="0"
          max="100"
          defaultValue="50"
          className="mx-[8px] h-[18px] w-[148px] appearance-none bg-[linear-gradient(#262626,#262626)] bg-[length:100%_2px] bg-center bg-no-repeat [&::-webkit-slider-thumb]:h-[17px] [&::-webkit-slider-thumb]:w-[8px] [&::-webkit-slider-thumb]:appearance-none [&::-webkit-slider-thumb]:bg-[#444]"
        />
        <button type="button" aria-label="Zoom in">
          <svg width="12" height="12" viewBox="0 0 12 12" stroke="#333">
            <path d="M0 6.500h12M6.500 1v11" />
          </svg>
        </button>
        <button type="button" className="w-[69px] pr-[11px] text-right">
          100%
        </button>
      </div>
    </div>
  );
}

/* ---------- taskbar ---------- */

function StartIcon() {
  return (
    <svg width="36" height="36" viewBox="0 0 36 36">
      <defs>
        <linearGradient id="start" x1="0" y1="0" x2="1" y2="1">
          <stop offset="0" stopColor="#4fd0ff" />
          <stop offset=".5" stopColor="#1a98e0" />
          <stop offset="1" stopColor="#0072d0" />
        </linearGradient>
      </defs>
      <path fill="url(#start)" d="M1.500.500H17V17H.5V1.500zM18.500.500h16l1 1V17h-17zM.5 18.500H17v17H1.500l-1-1zM18.500 18.500h17v16l-1 1h-16z" />
    </svg>
  );
}

function SearchIcon() {
  return (
    <svg width="38" height="38" viewBox="0 0 38 38">
      <path d="m26 26 9 9" stroke="#1c84d0" strokeWidth="4.500" strokeLinecap="round" />
      <circle cx="17" cy="17" r="14.500" fill="#e6eef4" stroke="#2196e0" strokeWidth="3.600" />
      <circle cx="17" cy="17" r="11" fill="#4bb8f5" />
      <path d="M6 17a11 11 0 0 1 11-11V17z" fill="#8fdcff" />
      <path d="M17 28a11 11 0 0 0 11-11H17z" fill="#2f9df0" />
      <path d="M17 6v22M6 17h22M17 6q-8 11 0 22M17 6q8 11 0 22" fill="none" stroke="#b8e6ff" strokeWidth=".8" />
    </svg>
  );
}

function TaskViewIcon() {
  return (
    <svg width="36" height="36" viewBox="0 0 36 36">
      <defs>
        <linearGradient id="taskDark" x1="0" y1="0" x2="0" y2="1">
          <stop offset="0" stopColor="#4a4a4a" />
          <stop offset="1" stopColor="#1a1a1a" />
        </linearGradient>
      </defs>
      <rect y="10" width="27" height="25" rx="1" fill="url(#taskDark)" />
      <rect x="9" y="1" width="27" height="24" rx="1" fill="#f7f7f7" />
      <path d="M9 10h18v15H9z" fill="#b9b9b9" />
    </svg>
  );
}

function ChatIcon() {
  return (
    <svg width="36" height="36" viewBox="0 0 36 36">
      <defs>
        <linearGradient id="chat" x1="0" y1=".2" x2="1" y2=".6">
          <stop offset="0" stopColor="#8562ac" />
          <stop offset=".5" stopColor="#5b5fc7" />
          <stop offset="1" stopColor="#6f8cf0" />
        </linearGradient>
      </defs>
      <path d="M18 1a17 17 0 1 1-7 32.500L1 35l1.500-8.500A17 17 0 0 1 18 1z" fill="url(#chat)" />
      <rect x="8" y="11" width="14" height="14" rx="2" fill="#fff" />
      <path d="m24 16 4-3.500v11L24 20z" fill="#fff" />
    </svg>
  );
}

function EdgeIcon() {
  return (
    <svg width="36" height="36" viewBox="0 0 36 36">
      <defs>
        <linearGradient id="edgeTop" x1="0" y1="0" x2="1" y2=".5">
          <stop offset="0" stopColor="#2ba6e4" />
          <stop offset=".5" stopColor="#30c3c8" />
          <stop offset="1" stopColor="#67e04c" />
        </linearGradient>
        <linearGradient id="edgeLeft" x1="0" y1="0" x2=".6" y2="1">
          <stop offset="0" stopColor="#0c64ad" />
          <stop offset="1" stopColor="#1490df" />
        </linearGradient>
      </defs>
      <path d="M0 17Q2 0 18.500 0 35 1 36 15q-.5 9-10 9-5 0-4.500-3 1.500-2 1-4-1-6-8-7Q5 9 0 17z" fill="url(#edgeTop)" />
      <path d="M0 17q4-8 14-7.500 8 1 8.500 7-4-5-8 0-4 7 1.500 14 5 6 12 2Q18 40 8 33 0 27 0 17z" fill="url(#edgeLeft)" />
      <path d="M15 16q-6 4-4 11 3 9 12 8.500 7-1.500 10.500-7 .5-1.500-1-1-5 2.500-10 .5-7-3-7.500-12z" fill="#0f539c" />
    </svg>
  );
}

function ExplorerIcon() {
  return (
    <svg width="36" height="36" viewBox="0 0 36 36">
      <defs>
        <linearGradient id="folder" x1="0" y1="0" x2="1" y2="1">
          <stop offset="0" stopColor="#ffd970" />
          <stop offset="1" stopColor="#fdb80f" />
        </linearGradient>
      </defs>
      <path d="M0 3q0-1 1-1h11l4 3h19q1 0 1 1v6H0z" fill="#e3a008" />
      <path d="M0 9h11l4-3.500h21V34H0z" fill="url(#folder)" />
      <path d="M6 34v-7q0-3 3-3h18q3 0 3 3v7z" fill="#0a72c4" />
      <path d="M11 29.500h14" stroke="#0b4c94" strokeWidth="2" />
    </svg>
  );
}

function StoreIcon() {
  return (
    <svg width="36" height="36" viewBox="0 0 36 36">
      <defs>
        <linearGradient id="store" x1="0" y1="0" x2=".6" y2="1">
          <stop offset="0" stopColor="#0d65b4" />
          <stop offset="1" stopColor="#263a63" />
        </linearGradient>
      </defs>
      <path d="M.5 5h35v26q0 4-4 4h-27q-4 0-4-4z" fill="url(#store)" />
      <path d="M9.500 8V2h17v6" fill="none" stroke="#37c0f0" strokeWidth="2" />
      <path d="M10.500 13h7v7h-7z" fill="#f25022" />
      <path d="M18.500 13h7v7h-7z" fill="#7fba00" />
      <path d="M10.500 21h7v7h-7z" fill="#00a4ef" />
      <path d="M18.500 21h7v7h-7z" fill="#ffb900" />
    </svg>
  );
}

function MailIcon() {
  return (
    <svg width="36" height="36" viewBox="0 0 36 36">
      <path d="M0 11 17 1q1-.6 2 0l17 10v6H0z" fill="#0f55a0" />
      <path d="M3 11h30v12H3z" fill="#f4f4f4" />
      <path d="M0 12l18 11L36 12v21q0 1-1 1H1q-1 0-1-1z" fill="#28aae8" />
      <path d="M18 23 36 12v22z" fill="#3cc6f2" />
      <path d="M0 12 36 34H1q-1 0-1-1z" fill="#1f93df" />
    </svg>
  );
}

function PrinterIcon() {
  return (
    <svg width="36" height="36" viewBox="0 0 36 36" fill="none" stroke="#d8f0fb" strokeWidth="1.300">
      <path d="M0 0h36v36H0z" fill="#0096d6" stroke="none" />
      <path d="M12 11.500V9h11v2.500M10 20H8.500v-6q0-2.500 2.500-2.500h13q3 0 3 2.500M12 17v9.500h8M12 17h9M14.500 20h4M14.500 23h4M11 14h2" />
      <rect x="21.500" y="16.500" width="5.500" height="11" rx="1" />
      <path d="M23.500 19v4" />
    </svg>
  );
}

function ChromeIcon() {
  return (
    <svg width="36" height="36" viewBox="0 0 36 36">
      <path d="M18 18 2.400 9A18 18 0 0 1 33.600 9z" fill="#e33b2e" />
      <path d="M18 9h15.600A18 18 0 0 1 18 36l7.800-13.500z" fill="#fcc31e" />
      <path d="M2.400 9 10.200 22.500 18 27h4.500L18 36A18 18 0 0 1 2.400 9z" fill="#2a9a48" />
      <circle cx="18" cy="18" r="9" fill="#fff" />
      <circle cx="18" cy="18" r="7" fill="#2b76e8" />
    </svg>
  );
}

function OfficeIcon({ letter, stripes, badge }: { letter: string; stripes: string[]; badge: string }) {
  return (
    <svg width="36" height="36" viewBox="0 0 36 36">
      {stripes.map((color, i) => (
        <rect key={color} x="8" y={2 + i * 8} width="27" height="8" fill={color} />
      ))}
      <rect x="0" y="9" width="18" height="18" rx="1" fill={badge} />
      <text x="9" y="23" textAnchor="middle" fontFamily="Open Sans, sans-serif" fontSize="14" fontWeight="700" fill="#fff">
        {letter}
      </text>
    </svg>
  );
}

const apps = [
  { name: "Start", icon: <StartIcon />, running: false },
  { name: "Search", icon: <SearchIcon />, running: false },
  { name: "Task View", icon: <TaskViewIcon />, running: false },
  { name: "Chat", icon: <ChatIcon />, running: false },
  { name: "Edge", icon: <EdgeIcon />, running: false },
  { name: "File Explorer", icon: <ExplorerIcon />, running: false },
  { name: "Store", icon: <StoreIcon />, running: false },
  { name: "Mail", icon: <MailIcon />, running: false },
  { name: "Printer", icon: <PrinterIcon />, running: false },
  { name: "Chrome", icon: <ChromeIcon />, running: true },
  { name: "Word", icon: <OfficeIcon letter="W" stripes={["#41a5ee", "#2b7cd3", "#185abd", "#103f91"]} badge="#1b5cbe" />, running: true },
  { name: "Excel", icon: <OfficeIcon letter="X" stripes={["#33c481", "#21a366", "#107c41", "#185c37"]} badge="#107c41" />, running: true },
];

function Taskbar() {
  return (
    <div className="h-[72px] bg-[#dadad9]">
      <div className="h-[2px] w-[81%] bg-[#c8c8c8]" />
      <div className="grid h-[70px] grid-cols-[1fr_auto_1fr] items-center">
        <button type="button" className="flex items-center gap-[11px] justify-self-start pl-[29px] text-left text-[17px] leading-6">
          <svg width="37" height="28" viewBox="0 0 37 28">
            <defs>
              <linearGradient id="cloud" x1="0" y1="0" x2=".4" y2="1">
                <stop offset="0" stopColor="#7ba3ea" />
                <stop offset="1" stopColor="#cfe0fa" />
              </linearGradient>
              <linearGradient id="cloudPuff" x1="1" y1="0" x2="0" y2="1">
                <stop offset="0" stopColor="#5b86dc" />
                <stop offset="1" stopColor="#d3e3fb" />
              </linearGradient>
            </defs>
            <path d="M8 27.500Q.5 27 .5 19.500T8 12Q10 1 18 1t10 11l-4 15.500z" fill="url(#cloud)" />
            <path d="M14 27.500q5-3 7-10 2-8 8-8 7 .5 7.500 9-.5 9-7.500 9z" fill="url(#cloudPuff)" />
          </svg>
          <span>
            <span className="block text-[#1a1a1a]">50°F</span>
            <span className="block text-[#5c5c5c]">Cloudy</span>
          </span>
        </button>
        <div className="flex">
          {apps.map((app) => (
            <button key={app.name} type="button" aria-label={app.name} className="flex h-[70px] w-[66px] flex-col items-center pt-[17px] pl-px">
              {app.icon}
              {app.running && <span className="mt-[6px] h-[5px] w-[9px] rounded-full bg-[#7d7d7d]" />}
            </button>
          ))}
        </div>
        <div className="flex items-center justify-end pr-[29px] pb-[2px] text-[#1a1a1a]">
          <button type="button" aria-label="Show hidden icons" className="mr-[15px]">
            <svg width="18" height="11" viewBox="0 0 18 11" fill="none" stroke="#222" strokeWidth="1.500">
              <path d="m.6 10 8.400-8.500L17.400 10" />
            </svg>
          </button>
          <button type="button" aria-label="OneDrive" className="mr-[18px]">
            <svg width="24" height="17" viewBox="0 0 24 17">
              <path d="M6 16q-5-.3-5-5t5-5q1.500-5 6.500-5t6.500 5q4 .5 4 5t-4 5z" fill="#dcdcdc" />
              <path d="M1.500 9q1-3 4.500-3 2-5 6.500-5t6.500 5l2.500 1.500-7 .5-7 5z" fill="#8a8a8a" />
              <path d="M6 16q-5-.3-5-5t5-5q1.500-5 6.500-5t6.500 5q4 .5 4 5t-4 5z" fill="none" stroke="#1a1a1a" strokeWidth="1.500" />
            </svg>
          </button>
          <button type="button" aria-label="Network" className="mr-[12px]">
            <svg width="24" height="18" viewBox="0 0 24 18" fill="none" stroke="#1a1a1a" strokeWidth="1.500">
              <path d="M.8 6.500q11.200-11 22.400 0M4.300 10q7.700-7.500 15.400 0M7.800 13.200q4.200-4 8.400 0" />
              <circle cx="12" cy="15.700" r="1.800" fill="#1a1a1a" stroke="none" />
            </svg>
          </button>
          <button type="button" aria-label="Volume" className="mr-[12px]">
            <svg width="24" height="20" viewBox="0 0 24 20" fill="none" stroke="#1a1a1a" strokeWidth="1.500">
              <path d="M1 7h3.500L11 1.500v17L4.500 13.500H1zM14 7q2 3 0 6.500M17 4.500q4 5.500 0 11M20 1.500q6 8.500 0 17" />
            </svg>
          </button>
          <button type="button" aria-label="Battery" className="mr-[19px]">
            <svg width="25" height="16" viewBox="0 0 25 16">
              <rect x="1" y="1" width="19.500" height="14" rx="3" fill="none" stroke="#1a1a1a" strokeWidth="1.500" />
              <path d="M3.500 4h8.500v8.500H3.500zM22 6h2q1 2 0 4.500h-2z" fill="#1a1a1a" />
            </svg>
          </button>
          <button type="button" className="w-[90px] text-right text-[17px] leading-[23px]">
            <span className="block">4:27 PM</span>
            <span className="block">11/26/2022</span>
          </button>
          <button type="button" className="ml-[17px] size-6 rounded-full bg-[#0078d7] text-[17px] leading-6 text-white">
            1
          </button>
        </div>
      </div>
    </div>
  );
}

export default function App() {
  return (
    <div className="flex h-screen flex-col overflow-hidden bg-white font-['Open_Sans','Noto_Sans',sans-serif]">
      <header className="relative bg-[#217346]">
        <HeaderArt />
        <TitleBar />
        <TabBar />
      </header>
      <Ribbon />
      <FormulaBar />
      <main className="flex min-h-0 flex-1 bg-[#e6e6e6]">
        <Grid />
        <VerticalScrollbar />
      </main>
      <SheetBar />
      <StatusBar />
      <Taskbar />
    </div>
  );
}
